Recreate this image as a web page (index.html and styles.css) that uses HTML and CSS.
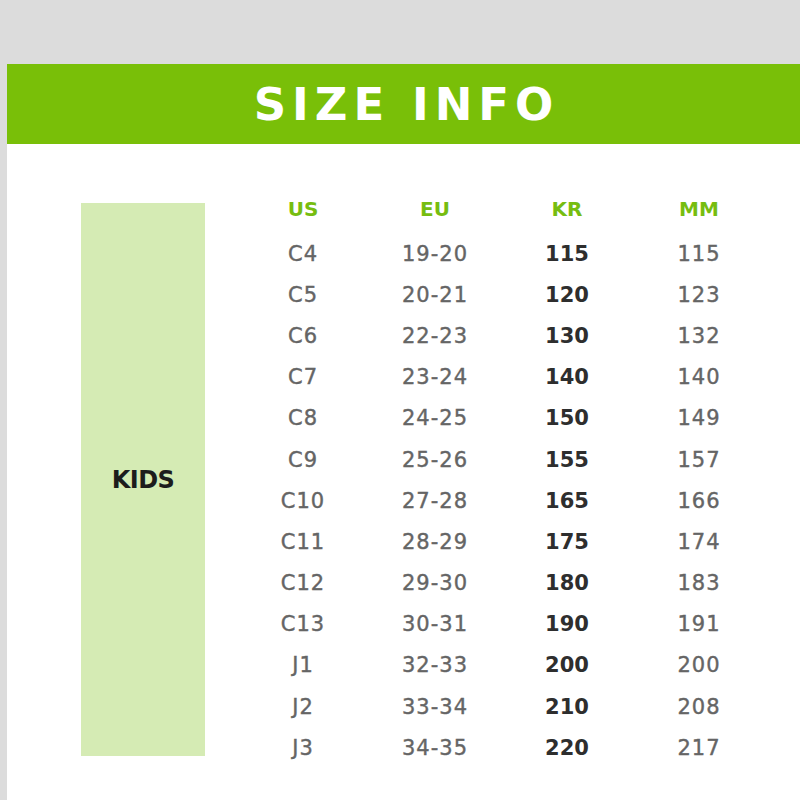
FILE: index.html
```html
<!DOCTYPE html>
<html>
<head>
<meta charset="utf-8">
<link rel="stylesheet" href="styles.css">
</head>
<body>
<div class="sheet">
  <div class="banner"><h1 class="title">SIZE INFO</h1></div>
  <div class="content">
    <div class="group"><span>KIDS</span></div>
    <div class="table">
      <div class="head">US</div><div class="head">EU</div><div class="head">KR</div><div class="head">MM</div>
      <div class="cell">C4</div><div class="cell">19-20</div><div class="cell kr">115</div><div class="cell">115</div>
      <div class="cell">C5</div><div class="cell">20-21</div><div class="cell kr">120</div><div class="cell">123</div>
      <div class="cell">C6</div><div class="cell">22-23</div><div class="cell kr">130</div><div class="cell">132</div>
      <div class="cell">C7</div><div class="cell">23-24</div><div class="cell kr">140</div><div class="cell">140</div>
      <div class="cell">C8</div><div class="cell">24-25</div><div class="cell kr">150</div><div class="cell">149</div>
      <div class="cell">C9</div><div class="cell">25-26</div><div class="cell kr">155</div><div class="cell">157</div>
      <div class="cell">C10</div><div class="cell">27-28</div><div class="cell kr">165</div><div class="cell">166</div>
      <div class="cell">C11</div><div class="cell">28-29</div><div class="cell kr">175</div><div class="cell">174</div>
      <div class="cell">C12</div><div class="cell">29-30</div><div class="cell kr">180</div><div class="cell">183</div>
      <div class="cell">C13</div><div class="cell">30-31</div><div class="cell kr">190</div><div class="cell">191</div>
      <div class="cell">J1</div><div class="cell">32-33</div><div class="cell kr">200</div><div class="cell">200</div>
      <div class="cell">J2</div><div class="cell">33-34</div><div class="cell kr">210</div><div class="cell">208</div>
      <div class="cell">J3</div><div class="cell">34-35</div><div class="cell kr">220</div><div class="cell">217</div>
    </div>
  </div>
</div>
</body>
</html>
```

FILE: styles.css
```css
html, body {
  margin: 0;
  padding: 0;
  height: 800px;
  overflow: hidden;
  background: #dcdcdc;
  font-family: "DejaVu Sans", "Open Sans", sans-serif;
}

.sheet {
  margin: 64px 0 0 7px;
  height: 736px;
  background: #ffffff;
  display: flex;
  flex-direction: column;
}

.banner {
  height: 80px;
  background: #79bf08;
  display: flex;
  align-items: center;
  justify-content: center;
}

.title {
  margin: 0;
  color: #ffffff;
  font-family: "DejaVu Sans", sans-serif;
  font-weight: bold;
  font-size: 45px;
  letter-spacing: 6px;
  padding-left: 6px;
  line-height: 1;
}

.content {
  display: flex;
  align-items: flex-start;
  padding: 39px 0 0 74px;
}

.group {
  width: 124px;
  height: 553px;
  margin-top: 20px;
  margin-right: 32px;
  background: #d5ebb4;
  display: flex;
  align-items: center;
  justify-content: center;
}

.group span {
  font-weight: bold;
  font-size: 24px;
  color: #1c1c1c;
  letter-spacing: -0.5px;
}

.table {
  display: grid;
  grid-template-columns: repeat(4, 132px);
  grid-template-rows: 50px repeat(13, 41.2px);
}

.head {
  display: flex;
  align-items: center;
  justify-content: center;
  color: #76bd10;
  font-weight: bold;
  font-size: 20px;
  padding-top: 2px;
}

.cell {
  display: flex;
  align-items: center;
  justify-content: center;
  color: #656565;
  font-size: 21px;
  letter-spacing: 1px;
  -webkit-text-stroke: 0.4px #656565;
}

.cell.kr {
  color: #2e2e2e;
  font-weight: bold;
  letter-spacing: 0;
  -webkit-text-stroke: 0;
}
```
